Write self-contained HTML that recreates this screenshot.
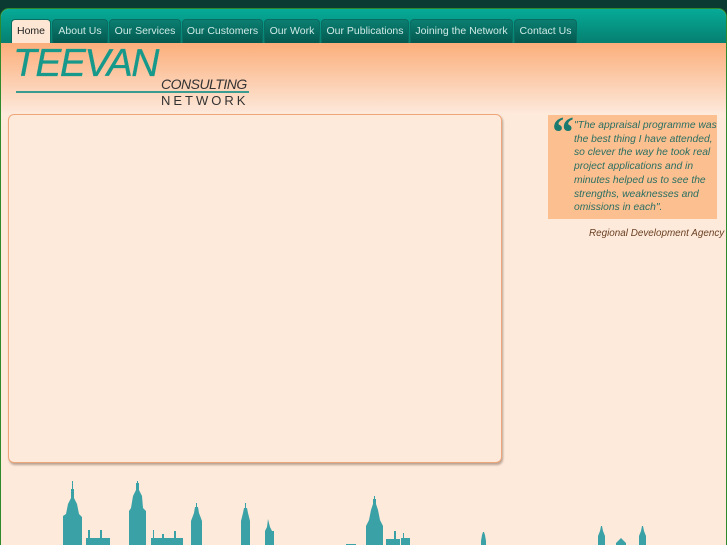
<!DOCTYPE html>
<html><head><style>
*{margin:0;padding:0;box-sizing:border-box}
body{width:727px;height:545px;overflow:hidden;background:#0b3a32;font-family:"Liberation Sans",sans-serif;position:relative}
#wrap{position:absolute;left:0;top:8px;width:727px;height:537px;background:#feeadb;border:1px solid #2e8a2a;border-bottom:none;border-radius:9px 9px 0 0;overflow:hidden}
#nav{position:absolute;left:0;top:0;width:100%;height:34px;background:linear-gradient(#06ab98,#067f70)}
.t{position:absolute;top:10px;height:24px;background:linear-gradient(#0b7f72,#04584f);border-radius:4px 4px 0 0;color:#cfe9e4;font-size:10.5px;line-height:23px;text-align:center;border:1px solid #0a6b60;border-bottom:none}
.t.on{background:#fde6d3;color:#222}
#hdr{position:absolute;left:0;top:34px;width:100%;height:70px;background:linear-gradient(#fbae7a,#fde8da)}
#box{position:absolute;left:7px;top:105px;width:494px;height:349px;border:1.5px solid #eea57a;border-radius:6px;box-shadow:1px 2px 2px #b9a393;background:#feeadb}
#q{position:absolute;left:547px;top:106px;width:169px;height:104px;background:#fcc090;padding:4px 0 0 26px;font-style:italic;font-size:10.3px;line-height:13.7px;color:#2a6e62}
#qm{position:absolute;left:4px;top:-4px;font-size:44px;line-height:44px;color:#1a7a70;font-style:normal;font-family:"Liberation Serif",serif;font-weight:bold}
#src{position:absolute;left:588px;top:219px;font-style:italic;font-size:9.9px;color:#6a4022;white-space:nowrap}
</style></head><body>
<div id="wrap">
<div id="nav">
<div class="t on" style="left:10px;width:40px">Home</div>
<div class="t" style="left:51px;width:56px">About Us</div>
<div class="t" style="left:108px;width:72px">Our Services</div>
<div class="t" style="left:181px;width:81px">Our Customers</div>
<div class="t" style="left:263px;width:56px">Our Work</div>
<div class="t" style="left:320px;width:88px">Our Publications</div>
<div class="t" style="left:409px;width:103px">Joining the Network</div>
<div class="t" style="left:513px;width:63px">Contact Us</div>
</div>
<div id="hdr">
<div style="position:absolute;left:12px;top:1px;font-size:39px;font-style:italic;color:#16998a;letter-spacing:-1.5px;line-height:40px;-webkit-text-stroke:0.3px #16998a">TEEVAN</div>
<div style="position:absolute;left:160px;top:33px;font-size:14px;font-style:italic;color:#333;letter-spacing:-0.5px">CONSULTING</div>
<div style="position:absolute;left:15px;top:48px;width:233px;height:2px;background:#3a9c90"></div>
<div style="position:absolute;left:160px;top:50px;font-size:13px;color:#333;letter-spacing:3px">NETWORK</div>
</div>
<div id="box"></div>
<div id="q"><span id="qm">“</span>"The appraisal programme was the best thing I have attended, so clever the way he took real project applications and in minutes helped us to see the strengths, weaknesses and omissions in each".</div>
<div id="src">Regional Development Agency</div>
<svg style="position:absolute;left:0;top:472px" width="727" height="67" fill="#3aa1a6">
<path d="M62 67V35l3-2 2-10 3-6V8h1V0h1v8h1v9l3 6 2 10 3 3v31z"/>
<path d="M128 67V30l2-3 2-12 3-6V2h1v-3h1v3h1v7l3 6 1 12 3 3v37z"/>
<path d="M190 67V40l3-8 1-6h1v-4h1v4h1l1 6 3 8v27z"/>
<path d="M240 67V40l2-8 1-5h1v-5h1v5h1l1 5 2 8v27z"/>
<path d="M264 67V50l2-4 1-8 2 8 2 4 2 0 0 17z"/>
<path d="M85 67V57h2v-8h2v8h10v-8h2v8h8v10zM150 67V57h2v-8h1v8h8v-4h2v4h10v-7h2v7h7v10z"/>
<path d="M365 67V45l3-6 2-10 2-6v-5h1v-3h1v3h1v5l2 6 2 10 3 6v22z"/>
<path d="M345 67v-4h10v4zM385 67V58h8v-8h2v8h4v9zM400 67v-10h2v-5h1v5h6v10z"/>
<path d="M480 67V60l1-6 1-3h1l1 3 1 6v7zM430 67v-3h30v3zM500 67v-3h100v3z"/>
<path d="M597 67V55l2-5 1-5h1l1 5 2 5v12zM638 67V55l2-5 1-5h1l1 5 2 5v12zM615 67v-5l5-5 5 5v5zM650 67v-3h77v3z"/>
</svg>
</div>
</body></html>
